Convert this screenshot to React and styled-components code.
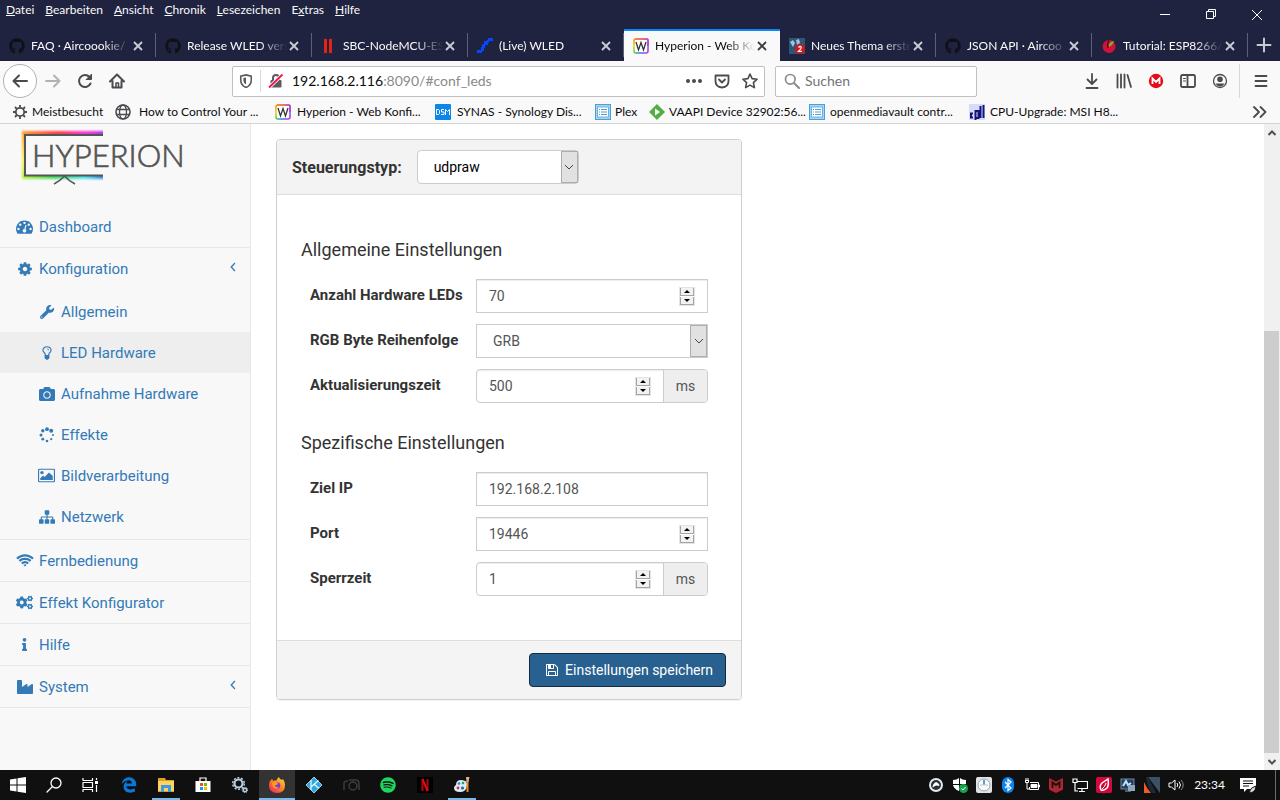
import React, { useState } from 'react';
import styled, { createGlobalStyle, css } from 'styled-components';
import {
  FaGithub, FaWrench, FaCamera, FaCogs, FaInfo, FaIndustry, FaEdgeLegacy, FaSpotify,
} from 'react-icons/fa';

const uiFont = '"Lato", "Open Sans", sans-serif';
const pageFont = '"Roboto", sans-serif';

const GlobalStyle = createGlobalStyle`
  * { box-sizing: border-box; }
  body { margin: 0; background: #fff; }
  button, input, select { font: inherit; color: inherit; margin: 0; }
  button { border: 0; padding: 0; background: none; }
  a { color: inherit; text-decoration: none; }
  ul { list-style: none; margin: 0; padding: 0; }
  svg { display: block; flex: none; }
`;

const Screen = styled.div`
  display: flex;
  flex-direction: column;
  min-height: 100vh;
`;

/* ---------- browser window ---------- */

const TitleBar = styled.header`
  display: flex;
  justify-content: space-between;
  height: 29px;
  background: #202340;
  color: #f9f9fa;
  font: 12px/20px ${uiFont};
`;

const MenuBar = styled.nav`
  display: flex;
  align-items: flex-start;
  gap: 11px;
  padding-left: 6px;
`;

const WindowButtons = styled.div`
  display: flex;
`;

const WindowButton = styled.button`
  display: grid;
  place-items: center;
  width: 46px;
  height: 29px;
`;

const TabStrip = styled.div`
  display: flex;
  height: 32px;
  background: #202340;
  color: #f9f9fa;
  font: 12px/16px ${uiFont};
`;

const Tab = styled.div`
  display: flex;
  align-items: center;
  flex: 1 1 0;
  min-width: 0;
  gap: 6px;
  padding: 0 13px 0 9px;
  border-top: 2px solid transparent;
  background: linear-gradient(#5d5f76, #5d5f76) right 2px / 1px 24px no-repeat;

  ${({ $active }) => $active && css`
    background: #f9f9fa;
    color: #0c0c0d;
    border-top-color: #0a84ff;
  `}
`;

const TabTitle = styled.span`
  flex: 1;
  margin-right: -4px;
  overflow: hidden;
  white-space: nowrap;
  mask-image: linear-gradient(to right, #000 72%, transparent 100%);
`;

const TabClose = styled.button`
  display: grid;
  place-items: center;
  width: 10px;
  height: 16px;
`;

const NewTab = styled.button`
  display: grid;
  place-items: center;
  width: 32px;
`;

const NavBar = styled.div`
  display: flex;
  align-items: center;
  height: 40px;
  padding: 0 3px;
  background: #f9f9fa;
  color: #4a4a4f;
  font: 14px/20px ${uiFont};
`;

const BackButton = styled.button`
  display: grid;
  place-items: center;
  width: 34px;
  height: 34px;
  border: 1px solid #b1b1b3;
  border-radius: 50%;
  background: #fff;
`;

const ToolButton = styled.button`
  display: grid;
  place-items: center;
  width: 32px;
  height: 32px;
  opacity: ${({ disabled }) => (disabled ? 0.4 : 1)};
`;

const Field = styled.div`
  display: flex;
  align-items: center;
  height: 31px;
  border: 1px solid #c0c0c2;
  border-radius: 2px;
  background: #fff;
`;

const AddressField = styled(Field)`
  flex: 1 1 533px;
  margin-left: 99px;
  gap: 12px;
  padding: 0 6px;
`;

const SearchField = styled(Field)`
  flex: 0 1 202px;
  margin: 0 99px 0 10px;
  padding-left: 8px;
  gap: 5px;
`;

const SiteInfo = styled.div`
  display: flex;
  align-items: center;
  gap: 7px;
`;

const ThinRule = styled.span`
  width: 1px;
  height: 22px;
  background: #d7d7db;
`;

const ToolbarRule = styled(ThinRule)`
  height: 34px;
  margin: 0 5px 0 3px;
`;

const Address = styled.div`
  flex: 1;
  color: #8a8a8c;
  white-space: nowrap;
  margin-left: -4px;
`;

const Host = styled.span`
  color: #0c0c0d;
`;

const SearchInput = styled.input`
  width: 100%;
  min-width: 0;
  border: 0;
  padding: 0;
  outline: 0;
  background: transparent;
  &::placeholder { color: #737373; opacity: 1; }
`;

const BookmarkBar = styled.nav`
  display: flex;
  align-items: center;
  height: 23px;
  padding: 0 12px;
  border-bottom: 1px solid #d4d4d6;
  background: #f9f9fa;
  color: #0c0c0d;
  font: 12px/20px ${uiFont};
`;

const Bookmark = styled.a`
  display: flex;
  align-items: center;
  flex: 0 0 ${({ $width }) => $width}px;
  gap: ${({ $gap = 6 }) => $gap}px;
  white-space: nowrap;
`;

const Overflow = styled.button`
  margin-left: auto;
`;

/* ---------- page ---------- */

const Page = styled.div`
  display: flex;
  flex: 1;
  background: #fff;
  font-family: ${pageFont};
`;

const Sidebar = styled.aside`
  flex: 0 0 251px;
  border-right: 1px solid #e7e7e7;
  background: #f8f8f8;
  color: #337ab7;
  font-size: 15px;
`;

const LogoLink = styled.a`
  display: block;
  height: 82px;
  padding: 2px 0 0 18px;
`;

const NavItem = styled.li`
  border-bottom: 1px solid #e7e7e7;
`;

const NavLink = styled.a`
  display: flex;
  align-items: center;
  gap: 6px;
  height: 41px;
  padding: 0 14px 0 16px;
`;

const SubLink = styled(NavLink)`
  padding-left: 38px;
  background: ${({ $active }) => ($active ? '#eee' : 'none')};
`;

const SubMenu = styled.ul`
  padding: 2px 0;
`;

const IconSlot = styled.span`
  display: grid;
  place-items: center;
  width: 17px;
`;

const Expander = styled.span`
  margin-left: auto;
  margin-bottom: 4px;
`;

const Main = styled.main`
  flex: 1;
  padding: 15px 26px 70px 25px;
  color: #333;
`;

const Panel = styled.form`
  width: calc(50% - 15px);
  min-width: 440px;
  border: 1px solid #cfcfcf;
  border-radius: 4px;
  box-shadow: 0 1px 1px rgba(0, 0, 0, 0.05);
  overflow: hidden;
`;

const PanelHeader = styled.div`
  display: flex;
  align-items: center;
  gap: 15px;
  height: 55px;
  padding-left: 15px;
  border-bottom: 1px solid #ddd;
  background: #f3f3f3;
  font-size: 16px;
`;

const HeaderLabel = styled.label`
  font-weight: 700;
`;

const PanelBody = styled.div`
  display: flex;
  flex-direction: column;
  gap: 27px;
  padding: 42px 24px 44px;
`;

const Section = styled.section`
  display: flex;
  flex-direction: column;
  gap: 16px;
`;

const SectionTitle = styled.h4`
  margin: 0;
  font-size: 18px;
  font-weight: 400;
  line-height: 26px;
`;

const Rows = styled.div`
  display: grid;
  gap: 11px;
  padding: 0 9px;
`;

const Row = styled.div`
  display: grid;
  grid-template-columns: 166px 1fr;
  align-items: center;
`;

const RowLabel = styled.label`
  padding-bottom: 2px;
  font-size: 15px;
  font-weight: 700;
  white-space: nowrap;
`;

const Control = styled.div`
  display: flex;
  align-items: center;
  height: 34px;
  border: 1px solid #ccc;
  border-radius: ${({ $rounded }) => ($rounded ? 4 : 0)}px;
  box-shadow: inset 0 1px 1px rgba(0, 0, 0, 0.075);
  background: #fff;
  color: #555;
  font-size: 14px;
  overflow: hidden;
`;

const TextInput = styled.input`
  flex: 1;
  min-width: 0;
  height: 100%;
  padding: 0 12px;
  border: 0;
  outline: 0;
  background: transparent;
  appearance: textfield;
  &::-webkit-inner-spin-button { display: none; }
`;

const Spinner = styled.div`
  display: grid;
  gap: 1px;
  margin-right: 12px;
  border: 1px solid #e3e3e3;
`;

const SpinButton = styled.button`
  display: grid;
  place-items: center;
  width: 14px;
  height: 8px;
  border: solid #a5a5a5;
  border-width: 0 1px 1px;
  background: #f2f2f2;
`;

const Unit = styled.span`
  display: grid;
  place-items: center;
  width: 44px;
  height: 100%;
  border-left: 1px solid #ccc;
  background: #eee;
`;

const SelectBox = styled.div`
  position: relative;
  width: ${({ $width }) => $width || '100%'};
  height: 34px;
  color: ${({ $dark }) => ($dark ? '#000' : '#555')};
  font-size: 14px;
`;

const Select = styled.select`
  width: 100%;
  height: 100%;
  padding: 0 34px 0 16px;
  border: 1px solid #ccc;
  border-radius: ${({ $rounded }) => ($rounded ? 4 : 0)}px;
  background: #fff;
  appearance: none;
`;

const SelectArrow = styled.span`
  position: absolute;
  top: 1px;
  right: 1px;
  bottom: 1px;
  display: grid;
  place-items: center;
  width: 17px;
  border: 1px solid #adadad;
  background: #e1e1e1;
  pointer-events: none;
`;

const PanelFooter = styled.div`
  display: flex;
  justify-content: flex-end;
  padding: 12px 15px;
  border-top: 1px solid #ddd;
  background: #f4f4f4;
`;

const SaveButton = styled.button`
  display: flex;
  align-items: center;
  gap: 6px;
  height: 34px;
  padding: 0 12px 0 15px;
  border: 1px solid #122b40;
  border-radius: 4px;
  background: #286090;
  color: #fff;
  font-size: 14px;
`;

const ScrollBar = styled.div`
  display: flex;
  flex-direction: column;
  width: 16px;
  background: #f0f0f0;
`;

const ScrollButton = styled.button`
  display: grid;
  place-items: center;
  height: 17px;
`;

const ScrollTrack = styled.div`
  display: grid;
  grid-template-rows: 190fr 422fr;
  flex: 1;
`;

const ScrollThumb = styled.div`
  grid-row: 2;
  margin-right: 1px;
  background: #cdcdcd;
`;

/* ---------- task bar ---------- */

const TaskBar = styled.footer`
  display: flex;
  height: 30px;
  background: #101010;
  color: #fff;
  font: 12px/30px ${uiFont};
`;

const SystemKeys = styled.div`
  display: flex;
  margin-right: 3px;
`;

const Apps = styled.div`
  display: flex;
  gap: 1px;
`;

const TaskButton = styled.button`
  display: grid;
  place-items: center;
  width: 36px;
  height: 30px;

  ${({ $running }) => $running && css`
    background: linear-gradient(#76b9ed, #76b9ed) center bottom / 28px 2px no-repeat;
  `}
  ${({ $active }) => $active && css`
    background: linear-gradient(#76b9ed, #76b9ed) center bottom / 36px 2px no-repeat #333;
  `}
`;

const Tray = styled.div`
  display: flex;
  align-items: center;
  gap: 8px;
  margin-left: auto;
`;

const Clock = styled.time`
  margin: 0 6px 0 2px;
`;

const ShowDesktop = styled.button`
  width: 5px;
  height: 30px;
  margin-left: 10px;
  border-left: 1px solid #6b6b6b;
`;

/* ---------- icons ---------- */

const Fa4 = ({ d, box = '0 0 1792 1792', size = 16 }) => (
  <svg width={size} height={size} viewBox={box} fill="currentColor"><path d={d} /></svg>
);

const faDashboard = 'M384 1152q0-53-37.5-90.5t-90.5-37.5-90.5 37.5-37.5 90.5 37.5 90.5 90.5 37.5 90.5-37.5 37.5-90.5zm192-448q0-53-37.5-90.5t-90.5-37.5-90.5 37.5-37.5 90.5 37.5 90.5 90.5 37.5 90.5-37.5 37.5-90.5zm428 481l101-382q6-26-7.5-48.5t-38.5-29.5-48 6.5-30 39.5l-101 382q-60 5-107 43.5t-63 98.5q-20 77 20 146t117 89 146-20 89-117q16-60-6-117t-72-91zm660-33q0-53-37.5-90.5t-90.5-37.5-90.5 37.5-37.5 90.5 37.5 90.5 90.5 37.5 90.5-37.5 37.5-90.5zm-640-640q0-53-37.5-90.5t-90.5-37.5-90.5 37.5-37.5 90.5 37.5 90.5 90.5 37.5 90.5-37.5 37.5-90.5zm448 192q0-53-37.5-90.5t-90.5-37.5-90.5 37.5-37.5 90.5 37.5 90.5 90.5 37.5 90.5-37.5 37.5-90.5zm320 448q0 261-141 483-19 29-54 29h-1402q-35 0-54-29-141-221-141-483 0-182 71-348t191-286 286-191 348-71 348 71 286 191 191 286 71 348z';
const faCog = 'M1152 896q0-106-75-181t-181-75-181 75-75 181 75 181 181 75 181-75 75-181zm512-109v222q0 12-8 23t-20 13l-185 28q-19 54-39 91 35 50 107 138 10 12 10 25t-9 23q-27 37-99 108t-94 71q-12 0-26-9l-138-108q-44 23-91 38-16 136-29 186-7 28-36 28h-222q-14 0-24.500-8.500t-11.500-21.500l-28-184q-49-16-90-37l-141 107q-10 9-25 9-14 0-25-11-126-114-165-168-7-10-7-23 0-12 8-23 15-21 51-66.500t54-70.500q-27-50-41-99l-183-27q-13-2-21-12.500t-8-23.500v-222q0-12 8-23t19-13l186-28q14-46 39-92-40-57-107-138-10-12-10-24 0-10 9-23 26-36 98.500-107.500t94.500-71.500q13 0 26 10l138 107q44-23 91-38 16-136 29-186 7-28 36-28h222q14 0 24.500 8.500t11.500 21.500l28 184q49 16 90 37l142-107q9-9 24-9 13 0 25 10 129 119 165 170 7 8 7 22 0 12-8 23-15 21-51 66.500t-54 70.500q26 50 41 98l183 28q13 2 21 12.500t8 23.500z';
const faBulb = 'M1120 576q0 13-9.500 22.500t-22.500 9.500-22.500-9.500-9.500-22.500q0-46-54-71t-106-25q-13 0-22.500-9.500t-9.500-22.500 9.500-22.500 22.500-9.500q50 0 99.500 16t87 54 37.500 90zm160 0q0-72-34.500-134t-90-101.500-123-62-136.500-22.500-136.500 22.500-123 62-90 101.500-34.500 134q0 101 68 180 10 11 30.500 33t30.500 33q128 153 141 298h228q13-145 141-298 10-11 30.500-33t30.500-33q68-79 68-180zm128 0q0 155-103 268-45 49-74.500 87t-59.500 95.500-34 107.500q47 28 47 82 0 37-25 64 25 27 25 64 0 52-45 81 13 23 13 47 0 46-31.500 71t-77.500 25q-20 44-60 70t-87 26-87-26-60-70q-46 0-77.500-25t-31.500-71q0-24 13-47-45-29-45-81 0-37 25-64-25-27-25-64 0-54 47-82-4-50-34-107.500t-59.500-95.500-74.500-87q-103-113-103-268 0-99 44.500-184.500t117-142 164-89 186.500-32.500 186.500 32.500 164 89 117 142 44.500 184.500z';
const faPicture = 'M576 576q0 80-56 136t-136 56-136-56-56-136 56-136 136-56 136 56 56 136zm1024 384v448h-1408v-192l320-320 160 160 512-512zm96-704h-1600q-13 0-22.500 9.500t-9.500 22.500v1216q0 13 9.500 22.500t22.500 9.500h1600q13 0 22.500-9.500t9.500-22.500v-1216q0-13-9.500-22.500t-22.500-9.500zm160 32v1216q0 66-47 113t-113 47h-1600q-66 0-113-47t-47-113v-1216q0-66 47-113t113-47h1600q66 0 113 47t47 113z';
const faSitemap = 'M1792 1248v320q0 40-28 68t-68 28h-320q-40 0-68-28t-28-68v-320q0-40 28-68t68-28h96v-192h-512v192h96q40 0 68 28t28 68v320q0 40-28 68t-68 28h-320q-40 0-68-28t-28-68v-320q0-40 28-68t68-28h96v-192h-512v192h96q40 0 68 28t28 68v320q0 40-28 68t-68 28h-320q-40 0-68-28t-28-68v-320q0-40 28-68t68-28h96v-192q0-52 38-90t90-38h512v-192h-96q-40 0-68-28t-28-68v-320q0-40 28-68t68-28h320q40 0 68 28t28 68v320q0 40-28 68t-68 28h-96v192h512q52 0 90 38t38 90v192h96q40 0 68 28t28 68z';
const faWifi = 'M1024 1523q-20 0-93-73.500t-73-93.500q0-32 62.500-54t103.500-22 103.500 22 62.500 54q0 20-73 93.500t-93 73.500zm270-271q-2 0-40-25t-101.500-50-128.500-25-128.500 25-101 50-40.500 25q-18 0-93.500-75t-75.500-93q0-13 10-23 78-77 196-121t233-44 233 44 196 121q10 10 10 23 0 18-75.500 93t-93.500 75zm273-272q-11 0-23-8-136-105-252-154.500t-268-49.500q-85 0-170.500 22t-149 53-113.500 62-79 53-31 22q-17 0-92-75t-75-93q0-12 10-22 132-132 320-205t380-73 380 73 320 205q10 10 10 22 0 18-75 93t-92 75zm271-271q-11 0-22-9-179-157-371.500-236.500t-420.500-79.500-420.500 79.500-371.500 236.500q-11 9-22 9-17 0-92.500-75t-75.500-93q0-13 10-23 187-186 445-288t527-102 527 102 445 288q10 10 10 23 0 18-75.500 93t-92.500 75z';
const faFloppy = 'M512 1536h768v-384h-768v384zm896 0h128v-896q0-14-10-38.500t-20-34.500l-281-281q-10-10-34-20t-39-10v416q0 40-28 68t-68 28h-576q-40 0-68-28t-28-68v-416h-128v1280h128v-416q0-40 28-68t68-28h832q40 0 68 28t28 68v416zm-384-928v-320q0-13-9.500-22.500t-22.500-9.500h-192q-13 0-22.500 9.500t-9.500 22.500v320q0 13 9.500 22.500t22.500 9.500h192q13 0 22.500-9.500t9.500-22.500zm640 32v928q0 40-28 68t-68 28h-1344q-40 0-68-28t-28-68v-1344q0-40 28-68t68-28h928q40 0 88 20t76 48l280 280q28 28 48 76t20 88z';

const EffectsIcon = () => (
  <svg width="16" height="16" viewBox="0 0 16 16" fill="currentColor">
    <circle cx="8" cy="2.200" r="1.900" />
    <circle cx="12.200" cy="3.800" r="2" />
    <circle cx="14" cy="8" r="1" />
    <circle cx="12.200" cy="12.200" r="1.100" />
    <circle cx="8" cy="14" r="1.300" />
    <circle cx="3.800" cy="12.200" r="1.400" />
    <circle cx="2" cy="8" r="1.500" />
    <circle cx="3.800" cy="3.800" r="1.700" />
  </svg>
);

const ChevronIcon = () => (
  <svg width="6" height="10" viewBox="0 0 6 10" fill="none" stroke="currentColor" strokeWidth="1.300"><path d="M5 1L1.200 5 5 9" /></svg>
);

const Stroke = ({ d, w = 2, size = 16, color = 'currentColor', cap = 'round', children }) => (
  <svg width={size} height={size} viewBox="0 0 16 16" fill="none" stroke={color} strokeWidth={w} strokeLinecap={cap} strokeLinejoin="round">
    <path d={d} />
    {children}
  </svg>
);

const CloseIcon = () => (
  <svg width="10" height="10" viewBox="0 0 10 10" fill="none" stroke="currentColor" strokeWidth="1.8" opacity="0.8"><path d="M1 1l8 8M9 1l-8 8" /></svg>
);

const HyperionFavicon = () => (
  <svg width="16" height="16" viewBox="0 0 16 16">
    <defs>
      <linearGradient id="fav" x1="0" y1="0" x2="1" y2="1">
        <stop offset="0" stopColor="#ff8a00" />
        <stop offset="0.25" stopColor="#e8d51c" />
        <stop offset="0.5" stopColor="#49d13f" />
        <stop offset="0.7" stopColor="#3f7bf0" />
        <stop offset="1" stopColor="#d02fd8" />
      </linearGradient>
      <linearGradient id="favTop"><stop offset="0" stopColor="#ff7a1a" /><stop offset="1" stopColor="#d22fe0" /></linearGradient>
    </defs>
    <rect x="1" y="1" width="14" height="14" rx="2" fill="#fff" stroke="url(#fav)" strokeWidth="1.6" />
    <path d="M2 1h12q1 0 1 1v6" fill="none" stroke="url(#favTop)" strokeWidth="1.6" />
    <path d="M3 4l2.500 8L8 4.500 10.500 12 13 4" fill="none" stroke="#333" strokeWidth="1.300" />
  </svg>
);

const RedBars = () => (
  <svg width="16" height="16"><path d="M3 1h3v14H3zM8 1h3v14H8z" fill="#e2231a" /></svg>
);

const WledFavicon = () => (
  <svg width="16" height="16"><path d="M0 12h5v3H0zM4 9h3v4H4zM5 6h3v4H5zM7 3h4v4H7zM11 0h5v3h-5zM10 2h2v3h-2z" fill="#0546ff" /></svg>
);

const ForumFavicon = () => (
  <svg width="16" height="16" viewBox="0 0 16 16">
    <rect width="16" height="16" fill="#2d5574" />
    <path d="M1 4l3-2 2 3-2 4zM7 2l3-1 1 4-3 2z" fill="#9cc7e4" />
    <circle cx="11" cy="11" r="5" fill="#d8141c" />
    <path d="M9.500 9.500q1.500-1.800 2.700-.4 .5 1-2.700 4.300h3.300" fill="none" stroke="#fff" strokeWidth="1.300" />
  </svg>
);

const BerryFavicon = () => (
  <svg width="16" height="16" viewBox="0 0 16 16">
    <circle cx="8" cy="8.500" r="6.500" fill="#d4103c" />
    <path d="M8 9q-1-5 5-6-1 4-5 6z" fill="#7db31c" />
    <path d="M7 10q-1-5 1-8" stroke="#3c1010" fill="none" strokeWidth="1.200" />
  </svg>
);

const DsmIcon = () => (
  <svg width="16" height="16" viewBox="0 0 16 16">
    <rect width="16" height="16" rx="1" fill="#0a87e8" />
    <path d="M1.500 5.500h2l1 1v3l-1 1h-2zM9 5.500H6.500v2.500H9v2.500H6M10.500 11V5.500l2 2 2-2V11" fill="none" stroke="#fff" strokeWidth="1" />
  </svg>
);

const ListIcon = () => (
  <svg width="16" height="16" viewBox="0 0 16 16">
    <rect x="0.500" y="0.500" width="15" height="15" fill="#a9d5f0" stroke="#4a9fd8" />
    <rect x="2.500" y="3" width="11" height="10" fill="#fff" stroke="#6bb2e0" />
    <path d="M4 5.500h1M6 5.500h6M4 8h1M6 8h6M4 10.500h1M6 10.500h6" stroke="#4a9fd8" />
  </svg>
);

const VaapiIcon = () => (
  <svg width="16" height="16" viewBox="0 0 16 16">
    <path d="M8 0l3 3 5 5-8 8-3-3-5-5z" fill="#52b043" />
    <path d="M6 4.500v7l5-3.500z" fill="#fff" />
  </svg>
);

const CpuIcon = () => (
  <svg width="16" height="16" viewBox="0 0 16 16">
    <rect width="16" height="16" fill="#d5dbf8" />
    <path d="M4 9.500H2v4h2M6.500 16V7h3v7h-2M11.500 2v12M14.500 1v13" fill="none" stroke="#14147c" strokeWidth="2" />
  </svg>
);

const GearIcon = () => (
  <svg width="16" height="16" viewBox="0 0 16 16" fill="none" stroke="#4a4a4f">
    <circle cx="8" cy="8" r="4.200" strokeWidth="1.800" />
    <path d="M8 1v2.500M8 12.500V15M1 8h2.500M12.500 8H15M3 3l1.800 1.800M11.200 11.200L13 13M3 13l1.800-1.800M11.200 4.800L13 3" strokeWidth="1.800" />
  </svg>
);

const GlobeIcon = () => (
  <svg width="16" height="16" viewBox="0 0 16 16" fill="none" stroke="#4a4a4f" strokeWidth="1.300">
    <circle cx="8" cy="8" r="7" strokeWidth="1.600" />
    <ellipse cx="8" cy="8" rx="3.500" ry="7" />
    <path d="M1 5.500h14M1 10.500h14" />
  </svg>
);

const ShieldIcon = () => (
  <svg width="14" height="14" viewBox="0 0 16 16">
    <path d="M8 1l6 1.500V7q0 5.500-6 8.500Q2 12.500 2 7V2.500z" fill="none" stroke="#5b5b60" strokeWidth="1.800" />
    <path d="M8 4v8q-3-2-3-5V4.500z" fill="#5b5b60" />
  </svg>
);

const InsecureIcon = () => (
  <svg width="16" height="16" viewBox="0 0 16 16">
    <path d="M5 7V5q0-3 3-3t3 3v2" fill="none" stroke="#5b5b60" strokeWidth="2" />
    <rect x="2.500" y="7" width="11" height="7.500" rx="1" fill="#5b5b60" />
    <path d="M1 14.500L14.500 1.500" stroke="#fff" strokeWidth="3.500" />
    <path d="M1 14.500L14.500 1.500" stroke="#f5134a" strokeWidth="1.800" />
  </svg>
);

const MegaIcon = () => (
  <svg width="16" height="16" viewBox="0 0 16 16">
    <circle cx="8" cy="8" r="7.200" fill="#e60b14" />
    <path d="M4.500 11V5.500L8 9l3.500-3.500V11" fill="none" stroke="#fff" strokeWidth="1.800" />
  </svg>
);

const AccountIcon = () => (
  <svg width="16" height="16" viewBox="0 0 16 16">
    <circle cx="8" cy="8" r="6.500" fill="none" stroke="currentColor" strokeWidth="1.300" />
    <circle cx="8" cy="6.300" r="2.800" fill="currentColor" />
    <path d="M3.500 10.500h9q-1.500 3-4.500 3t-4.500-3z" fill="currentColor" />
  </svg>
);

const HyperionLogo = () => (
  <svg width="180" height="64" viewBox="18 126 180 64">
    <defs>
      <linearGradient id="glowTop"><stop offset="0" stopColor="#ff9a2e" /><stop offset="0.4" stopColor="#ff3b4e" /><stop offset="0.7" stopColor="#ff35d8" /><stop offset="1" stopColor="#8a3cf5" /></linearGradient>
      <linearGradient id="glowLeft" x1="0" y1="0" x2="0" y2="1"><stop offset="0" stopColor="#ff9a2e" /><stop offset="0.6" stopColor="#fff04a" /><stop offset="1" stopColor="#b6f03c" /></linearGradient>
      <linearGradient id="glowBottom"><stop offset="0" stopColor="#b6f03c" /><stop offset="0.35" stopColor="#3fe05a" /><stop offset="0.7" stopColor="#4fe6f0" /><stop offset="1" stopColor="#2f55e8" /></linearGradient>
      <filter id="soft" x="-10%" y="-10%" width="120%" height="120%"><feGaussianBlur stdDeviation="0.8" /></filter>
      <clipPath id="cut"><rect x="18" y="126" width="85" height="64" /></clipPath>
    </defs>
    <g clipPath="url(#cut)">
      <g filter="url(#soft)">
        <rect x="22" y="131" width="90" height="5" fill="url(#glowTop)" />
        <rect x="22" y="132" width="4" height="46" fill="url(#glowLeft)" />
        <rect x="22" y="174" width="90" height="5" fill="url(#glowBottom)" />
      </g>
      <path d="M110 135H25v40.500h85" fill="#f8f8f8" stroke="#555" strokeWidth="2" />
    </g>
    <path d="M54 184q6-3 10.500-8 4.500 5 10.500 8" fill="none" stroke="#555" strokeWidth="1.600" />
    <text x="32" y="167" fill="#555" stroke="#555" strokeWidth="0.700" fontFamily="Lato, sans-serif" fontSize="31" fontWeight="300">HYPERION</text>
  </svg>
);

const WindowsIcon = () => (
  <svg width="16" height="16" viewBox="0 0 16 16" fill="#fff"><path d="M0 2.500l6.500-1V7.500H0zM7.500 1.300L16 0v7.500H7.500zM0 8.500h6.500v6L0 13.500zM7.500 8.500H16V16l-8.500-1.300z" /></svg>
);

const ExplorerIcon = () => (
  <svg width="18" height="16" viewBox="0 0 18 16">
    <path d="M1 1h7l1 2h8v12H1z" fill="#d9a126" />
    <path d="M1 4h16v10H1z" fill="#ffd45e" />
    <path d="M4 15V8h10v7h-3v-4H7v4z" fill="#3b9be8" />
  </svg>
);

const StoreIcon = () => (
  <svg width="16" height="16" viewBox="0 0 16 16">
    <path d="M5 4V1h6v3" fill="none" stroke="#fff" strokeWidth="1.200" />
    <path d="M0.500 4h15v11h-15z" fill="#fff" />
    <path d="M5 6h3v3H5z" fill="#f25022" /><path d="M9 6h3v3H9z" fill="#7fba00" />
    <path d="M5 10h3v3H5z" fill="#00a4ef" /><path d="M9 10h3v3H9z" fill="#ffb900" />
  </svg>
);

const ServicesIcon = () => (
  <svg width="16" height="16" viewBox="0 0 16 16" fill="none" stroke="#b5cfe2">
    <circle cx="6.500" cy="6.500" r="4" strokeWidth="2.200" />
    <circle cx="6.500" cy="6.500" r="5.800" strokeWidth="1.500" strokeDasharray="2 1.640" />
    <circle cx="13" cy="13" r="1.700" strokeWidth="1.500" />
    <circle cx="13" cy="13" r="2.700" strokeDasharray="1.200 0.920" />
  </svg>
);

const FirefoxIcon = () => (
  <svg width="16" height="16" viewBox="0 0 16 16">
    <defs><linearGradient id="fox" x1="1" y1="0" x2="0.200" y2="1"><stop offset="0" stopColor="#ffe14a" /><stop offset="0.500" stopColor="#ff8a1e" /><stop offset="1" stopColor="#f5246a" /></linearGradient></defs>
    <path d="M3 2l1.500 2Q6 3 7.500 3.500 8 1 10 0q0 2 3 3l1-1q2 3 2 6 0 8-8 8T0 8q0-4 3-6z" fill="url(#fox)" />
    <circle cx="8" cy="8.500" r="3.300" fill="#7a3ddb" />
    <path d="M3 6q3-2 6 0 0 2-3 2 0 3 4 2-2 3-5 1-2-2-2-5z" fill="#ff9a22" />
  </svg>
);

const KodiIcon = () => (
  <svg width="16" height="16" viewBox="0 0 16 16">
    <path d="M8 0l8 8-8 8-8-8z" fill="#2ea8e0" stroke="#bfe6f7" strokeWidth="0.800" />
    <path d="M5 3v10M5 10l7.500-6.500M8.500 7.500l4.500 4" stroke="#f2fafd" strokeWidth="1.200" fill="none" />
  </svg>
);

const DarkCameraIcon = () => (
  <svg width="18" height="16" viewBox="0 0 18 16" fill="none" stroke="#3d3d3d" strokeWidth="1.500">
    <path d="M2 13V6q0-2 4-2M7 3h8q2 1 2 3v7" /><circle cx="11" cy="9" r="4" />
  </svg>
);

const NetflixIcon = () => (
  <svg width="16" height="16" viewBox="0 0 16 16">
    <rect width="16" height="16" fill="#000" />
    <path d="M5.500 14V2M10.500 14V2" stroke="#b00610" strokeWidth="2" /><path d="M5.500 2l5 12" stroke="#e50914" strokeWidth="2" />
  </svg>
);

const PaintIcon = () => (
  <svg width="16" height="16" viewBox="0 0 16 16">
    <path d="M7 3q7 0 6 6t-7 6q-6 0-6-4 0-2 2-3 0-5 5-5z" fill="#d9ecf7" />
    <circle cx="5" cy="6.500" r="1.300" fill="#2f7ed0" /><circle cx="9" cy="6" r="1.300" fill="#2fa84a" />
    <circle cx="4" cy="11" r="1.400" fill="#d8352c" /><circle cx="8.500" cy="11" r="1.500" fill="#1b5fae" />
    <path d="M13.500 4v11" stroke="#e38b2c" strokeWidth="2" /><path d="M12 0h3.500l-1 5h-2z" fill="#d9b48a" />
  </svg>
);

const TrayIcons = () => (
  <>
    <svg width="16" height="16" viewBox="0 0 16 16"><circle cx="8" cy="8" r="6" fill="#26313c" stroke="#e8e8e8" strokeWidth="2" /><path d="M4.500 10.500q0-4 3.500-5.500 3.500 1.500 3.500 4l-3.500-.5z" fill="#fff" /></svg>
    <svg width="16" height="16" viewBox="0 0 16 16"><path d="M7 1v6H1V3q4 0 6-2zM8 1q2 2 6 2v4H8zM1 8h6v6q-5-2-6-6zM8 8h6q-1 4-6 6z" fill="#fff" /><circle cx="11.500" cy="11.500" r="4.500" fill="#16a34a" /><path d="M9.500 11.500l1.500 1.500 2.500-3" stroke="#fff" fill="none" /></svg>
    <svg width="16" height="16" viewBox="0 0 16 16"><rect width="16" height="16" rx="2" fill="#dfe3e6" /><circle cx="8" cy="8" r="6" fill="#f7f9fa" stroke="#9aa3aa" /><path d="M8 3v5" stroke="#1f86d6" strokeWidth="1.500" /><path d="M4 8h8" stroke="#c3c9ce" /></svg>
    <svg width="16" height="16" viewBox="0 0 16 16"><rect x="2" width="12" height="16" rx="6" fill="#0a84ef" /><path d="M5 5l6 6-3 2.500v-11L11 5l-6 6" fill="none" stroke="#fff" strokeWidth="1.200" /></svg>
    <svg width="16" height="16" viewBox="0 0 16 16" fill="none" stroke="#fff"><path d="M6 5.500h8.500v7H5.500V10M14.500 8h1v2h-1M1 3.500h4M2 1v2M4 1v2M3 6v6h2M1.500 3.500v2h3v-2" /><path d="M7 7.500h6v3H7z" fill="#fff" /></svg>
    <svg width="16" height="16" viewBox="0 0 16 16"><path d="M1 1l7 3.500L15 1v11.500L8 16l-7-3.500z" fill="#b3252e" /><path d="M4.500 11V5.500L8 8l3.500-2.500V11" fill="none" stroke="#101010" strokeWidth="1.800" /></svg>
    <svg width="16" height="16" viewBox="0 0 16 16" fill="none" stroke="#fff" strokeWidth="1.200"><path d="M5 4.500h10.500v7H5.500M10 11.500v3M7 14.500h6M1 2h4v3.500H1zM3 5.500v8.500h3" /></svg>
    <svg width="16" height="16" viewBox="0 0 16 16"><rect width="16" height="16" rx="2" fill="#d3093b" /><path d="M5 13q-2-4 1-7 3-2 6-4 1 6-1 9-3 3-6 2z" fill="none" stroke="#fff" strokeWidth="1.500" /><path d="M6 12q3-2 4-6" fill="none" stroke="#fff" /></svg>
    <svg width="16" height="16" viewBox="0 0 16 16"><rect x="1" y="2" width="13" height="10" fill="#23405f" stroke="#6f8aa3" /><path d="M3 9l3-5 2 4 3-2" stroke="#bde2fa" strokeWidth="2" fill="none" /><rect x="8" y="8" width="7" height="6" fill="#8fa7bd" /><path d="M5 14h6" stroke="#8fa7bd" /></svg>
    <svg width="16" height="16" viewBox="0 0 16 16"><path d="M4 0h12v16z" fill="#3b5266" /><path d="M0 5q3 7 7 11H0z" fill="#f0592a" /><path d="M2 0h2l8 16H8Q3 10 2 0z" fill="#1c2a36" /></svg>
    <svg width="16" height="16" viewBox="0 0 16 16" fill="none" stroke="#fff"><path d="M1 6v4h2.500L7 13V3L3.500 6z" /><path d="M9 6q1.500 2 0 4M11 4.500q3 3.500 0 7" /><path d="M13 3q4.500 5 0 10" opacity="0.500" /></svg>
  </>
);

const NotificationIcon = () => (
  <svg width="18" height="18" viewBox="0 0 18 18">
    <path d="M1 2h16v11H8l-3 3v-3H1z" fill="#fff" />
    <path d="M4 5h10M4 7.500h10M4 10h6" stroke="#101010" />
    <path d="M10 16q6 2 7-6-5 1-7 6z" fill="#ddd" stroke="#101010" />
  </svg>
);

/* ---------- data ---------- */

const menus = [['', 'D', 'atei'], ['', 'B', 'earbeiten'], ['', 'A', 'nsicht'], ['', 'C', 'hronik'], ['', 'L', 'esezeichen'], ['E', 'x', 'tras'], ['', 'H', 'ilfe']];

const tabs = [
  { title: 'FAQ · Aircoookie/', icon: <FaGithub size={16} color="#101018" /> },
  { title: 'Release WLED vers', icon: <FaGithub size={16} color="#101018" /> },
  { title: 'SBC-NodeMCU-ES', icon: <RedBars /> },
  { title: '(Live) WLED', icon: <WledFavicon /> },
  { title: 'Hyperion - Web Ko', icon: <HyperionFavicon />, active: true },
  { title: 'Neues Thema erste', icon: <ForumFavicon /> },
  { title: 'JSON API · Aircoo', icon: <FaGithub size={16} color="#101018" /> },
  { title: 'Tutorial: ESP8266/', icon: <BerryFavicon /> },
];

const bookmarks = [
  { title: 'Meistbesucht', icon: <GearIcon />, width: 103, gap: 4 },
  { title: 'How to Control Your ...', icon: <GlobeIcon />, width: 160, gap: 8 },
  { title: 'Hyperion - Web Konfi...', icon: <HyperionFavicon />, width: 160 },
  { title: 'SYNAS - Synology Dis...', icon: <DsmIcon />, width: 160 },
  { title: 'Plex', icon: <ListIcon />, width: 54, gap: 4 },
  { title: 'VAAPI Device 32902:56...', icon: <VaapiIcon />, width: 160, gap: 4 },
  { title: 'openmediavault contr...', icon: <ListIcon />, width: 160, gap: 5 },
  { title: 'CPU-Upgrade: MSI H8...', icon: <CpuIcon />, width: 160, gap: 5 },
];

const configLinks = [
  { label: 'Allgemein', icon: <FaWrench size={14} /> },
  { label: 'LED Hardware', icon: <Fa4 d={faBulb} />, active: true },
  { label: 'Aufnahme Hardware', icon: <FaCamera size={16} /> },
  { label: 'Effekte', icon: <EffectsIcon /> },
  { label: 'Bildverarbeitung', icon: <Fa4 d={faPicture} box="-64 0 1920 1792" size={17} /> },
  { label: 'Netzwerk', icon: <Fa4 d={faSitemap} /> },
];

const lowerLinks = [
  { label: 'Fernbedienung', icon: <Fa4 d={faWifi} box="0 0 2048 1792" size={18} /> },
  { label: 'Effekt Konfigurator', icon: <FaCogs size={17} /> },
  { label: 'Hilfe', icon: <FaInfo size={13} /> },
  { label: 'System', icon: <FaIndustry size={16} />, expandable: true },
];

/* ---------- components ---------- */

const NumberField = ({ id, value, unit }) => {
  const [number, setNumber] = useState(value);
  return (
    <Control $rounded={Boolean(unit)}>
      <TextInput id={id} type="number" value={number} onChange={(e) => setNumber(e.target.value)} />
      <Spinner>
        <SpinButton type="button" aria-label="Mehr" onClick={() => setNumber(Number(number) + 1)}>
          <svg width="6" height="3"><path d="M0 3l3-3 3 3z" /></svg>
        </SpinButton>
        <SpinButton type="button" aria-label="Weniger" onClick={() => setNumber(Number(number) - 1)}>
          <svg width="6" height="3"><path d="M0 0l3 3 3-3z" /></svg>
        </SpinButton>
      </Spinner>
      {unit && <Unit>{unit}</Unit>}
    </Control>
  );
};

const DropDown = ({ id, options, width, dark, rounded }) => (
  <SelectBox $width={width} $dark={dark}>
    <Select id={id} $rounded={rounded}>
      {options.map((o) => <option key={o}>{o}</option>)}
    </Select>
    <SelectArrow>
      <svg width="10" height="6" fill="none" stroke="#444"><path d="M1 1l4 4 4-4" /></svg>
    </SelectArrow>
  </SelectBox>
);

const Browser = () => (
  <>
    <TitleBar>
      <MenuBar>
        {menus.map(([before, key, after]) => (
          <button key={after} type="button">{before}<u>{key}</u>{after}</button>
        ))}
      </MenuBar>
      <WindowButtons>
        <WindowButton aria-label="Minimieren"><svg width="10" height="10" stroke="#fff"><path d="M0 4.500h10" /></svg></WindowButton>
        <WindowButton aria-label="Wiederherstellen"><svg width="11" height="11" fill="none" stroke="#fff"><path d="M0.500 2.500h7v7h-7zM2.500 2.500v-2h7v7h-2" /></svg></WindowButton>
        <WindowButton aria-label="Schließen"><svg width="10" height="10" stroke="#fff"><path d="M0 0l10 10M10 0L0 10" /></svg></WindowButton>
      </WindowButtons>
    </TitleBar>

    <TabStrip>
      {tabs.map((tab) => (
        <Tab key={tab.title} $active={tab.active}>
          {tab.icon}
          <TabTitle>{tab.title}</TabTitle>
          <TabClose aria-label="Tab schließen"><CloseIcon /></TabClose>
        </Tab>
      ))}
      <NewTab aria-label="Neuer Tab"><Stroke d="M8 1.500v13M1.500 8h13" color="#c8c9d0" /></NewTab>
    </TabStrip>

    <NavBar>
      <BackButton aria-label="Zurück"><Stroke d="M15 8H2M7 2.500L1.500 8 7 13.500" /></BackButton>
      <ToolButton aria-label="Vor" disabled><Stroke d="M1 8h13M9 2.500L14.500 8 9 13.500" /></ToolButton>
      <ToolButton aria-label="Neu laden"><Stroke d="M13.500 10.500A6 6 0 1 1 12.500 4"><path d="M14.500 1.500v5h-5z" fill="currentColor" strokeWidth="1" /></Stroke></ToolButton>
      <ToolButton aria-label="Startseite"><Stroke d="M1 8.500L8 1.500l7 7M3.500 8v6.500h9V8"><path d="M7 14v-4h2.500v4" strokeWidth="1.500" /></Stroke></ToolButton>
      <AddressField>
        <SiteInfo><ShieldIcon /><ThinRule /><InsecureIcon /></SiteInfo>
        <Address><Host>192.168.2.116</Host>:8090/#conf_leds</Address>
        <svg width="16" height="16" fill="currentColor"><circle cx="2" cy="8" r="2" /><circle cx="8" cy="8" r="2" /><circle cx="14" cy="8" r="2" /></svg>
        <Stroke d="M1.500 2.500h13V8q0 6-6.500 6.500Q1.500 14 1.500 8zM5 6.500l3 3 3-3" w={1.8} />
        <Stroke d="M8 1l2.100 4.600 5 .6-3.700 3.400 1 5L8 12.100l-4.400 2.500 1-5L.9 6.200l5-.6z" w={1.6} />
      </AddressField>
      <SearchField>
        <Stroke d="M10.200 10.200L15 15" color="#8a8a8c"><circle cx="6.300" cy="6.300" r="4.800" strokeWidth="1.700" /></Stroke>
        <SearchInput aria-label="Suchen" placeholder="Suchen" />
      </SearchField>
      <ToolButton aria-label="Downloads"><Stroke d="M8 1v9M3.500 6.500L8 11l4.500-4.500M2.500 15h11" w={1.8} /></ToolButton>
      <ToolButton aria-label="Bibliothek"><Stroke d="M1.500 1.500v13M5 1.500v13M8.500 1.500v13M11.500 2l3.500 12" w={1.8} /></ToolButton>
      <ToolButton aria-label="MEGA"><MegaIcon /></ToolButton>
      <ToolButton aria-label="Sidebar"><Stroke d="M2.500 2h11q1.500 0 1.500 1.500v9q0 1.500-1.500 1.500h-11Q1 14 1 12.500v-9Q1 2 2.500 2zM7.500 2v12" w={1.8}><path d="M3.500 5.500h2M3.500 8h2" strokeWidth="1" /></Stroke></ToolButton>
      <ToolButton aria-label="Konto"><AccountIcon /></ToolButton>
      <ToolbarRule />
      <ToolButton aria-label="Menü"><Stroke d="M2.500 3h11M2.500 8h11M2.500 13h11" w={1.8} /></ToolButton>
    </NavBar>

    <BookmarkBar>
      {bookmarks.map((b) => (
        <Bookmark key={b.title} href="#" $width={b.width} $gap={b.gap}>{b.icon}{b.title}</Bookmark>
      ))}
      <Overflow aria-label="Weitere Lesezeichen"><Stroke d="M2 3l5 5-5 5M8.500 3l5 5-5 5" color="#4a4a4f" w={1.8} /></Overflow>
    </BookmarkBar>
  </>
);

const SideNav = () => (
  <Sidebar>
    <LogoLink href="#" aria-label="Hyperion"><HyperionLogo /></LogoLink>
    <ul>
      <NavItem><NavLink href="#dashboard"><IconSlot><Fa4 d={faDashboard} size={17} /></IconSlot>Dashboard</NavLink></NavItem>
      <NavItem>
        <NavLink href="#conf"><IconSlot><Fa4 d={faCog} /></IconSlot>Konfiguration<Expander><ChevronIcon /></Expander></NavLink>
        <SubMenu>
          {configLinks.map((l) => (
            <li key={l.label}>
              <SubLink href="#conf_leds" $active={l.active}><IconSlot>{l.icon}</IconSlot>{l.label}</SubLink>
            </li>
          ))}
        </SubMenu>
      </NavItem>
      {lowerLinks.map((l) => (
        <NavItem key={l.label}>
          <NavLink href="#"><IconSlot>{l.icon}</IconSlot>{l.label}{l.expandable && <Expander><ChevronIcon /></Expander>}</NavLink>
        </NavItem>
      ))}
    </ul>
  </Sidebar>
);

const LedSettings = () => (
  <Panel onSubmit={(e) => e.preventDefault()}>
    <PanelHeader>
      <HeaderLabel htmlFor="leddevices">Steuerungstyp:</HeaderLabel>
      <DropDown id="leddevices" options={['udpraw']} width="162px" dark rounded />
    </PanelHeader>
    <PanelBody>
      <Section>
        <SectionTitle>Allgemeine Einstellungen</SectionTitle>
        <Rows>
          <Row><RowLabel htmlFor="count">Anzahl Hardware LEDs</RowLabel><NumberField id="count" value={70} /></Row>
          <Row><RowLabel htmlFor="order">RGB Byte Reihenfolge</RowLabel><DropDown id="order" options={['GRB', 'RGB', 'BGR']} /></Row>
          <Row><RowLabel htmlFor="rewrite">Aktualisierungszeit</RowLabel><NumberField id="rewrite" value={500} unit="ms" /></Row>
        </Rows>
      </Section>
      <Section>
        <SectionTitle>Spezifische Einstellungen</SectionTitle>
        <Rows>
          <Row><RowLabel htmlFor="host">Ziel IP</RowLabel><Control><TextInput id="host" defaultValue="192.168.2.108" /></Control></Row>
          <Row><RowLabel htmlFor="port">Port</RowLabel><NumberField id="port" value={19446} /></Row>
          <Row><RowLabel htmlFor="latch">Sperrzeit</RowLabel><NumberField id="latch" value={1} unit="ms" /></Row>
        </Rows>
      </Section>
    </PanelBody>
    <PanelFooter>
      <SaveButton type="submit"><Fa4 d={faFloppy} size={14} />Einstellungen speichern</SaveButton>
    </PanelFooter>
  </Panel>
);

const Desktop = () => (
  <TaskBar>
    <SystemKeys>
      <TaskButton aria-label="Start"><WindowsIcon /></TaskButton>
      <TaskButton aria-label="Suche"><Stroke d="M6 10L1 15" w={1.3} color="#fff"><circle cx="10" cy="6" r="5" /></Stroke></TaskButton>
      <TaskButton aria-label="Taskansicht"><Stroke d="M1 1v2.500h9.500V1M1 15v-2.500h9.500V15M1 5.500h9.500v5H1zM14.500 1v2M14.500 8v7" w={1.2} color="#fff" cap="butt"><path d="M13 4h3v3h-3z" fill="#fff" stroke="none" /></Stroke></TaskButton>
    </SystemKeys>
    <Apps>
      <TaskButton aria-label="Edge"><FaEdgeLegacy size={16} color="#0b78d7" /></TaskButton>
      <TaskButton aria-label="Explorer" $running><ExplorerIcon /></TaskButton>
      <TaskButton aria-label="Store"><StoreIcon /></TaskButton>
      <TaskButton aria-label="Dienste"><ServicesIcon /></TaskButton>
      <TaskButton aria-label="Firefox" $active><FirefoxIcon /></TaskButton>
      <TaskButton aria-label="Kodi"><KodiIcon /></TaskButton>
      <TaskButton aria-label="Kamera"><DarkCameraIcon /></TaskButton>
      <TaskButton aria-label="Spotify"><FaSpotify size={16} color="#1ed760" /></TaskButton>
      <TaskButton aria-label="Netflix"><NetflixIcon /></TaskButton>
      <TaskButton aria-label="Paint" $running><PaintIcon /></TaskButton>
    </Apps>
    <Tray>
      <TrayIcons />
      <Clock>23:34</Clock>
      <NotificationIcon />
      <ShowDesktop aria-label="Desktop anzeigen" />
    </Tray>
  </TaskBar>
);

const App = () => (
  <Screen>
    <GlobalStyle />
    <Browser />
    <Page>
      <SideNav />
      <Main><LedSettings /></Main>
      <ScrollBar>
        <ScrollButton aria-label="Nach oben"><svg width="8" height="6" fill="none" stroke="#505050" strokeWidth="2"><path d="M0.500 5L4 1.500 7.500 5" /></svg></ScrollButton>
        <ScrollTrack><ScrollThumb /></ScrollTrack>
        <ScrollButton aria-label="Nach unten"><svg width="8" height="6" fill="none" stroke="#505050" strokeWidth="2"><path d="M0.500 1L4 4.500 7.500 1" /></svg></ScrollButton>
      </ScrollBar>
    </Page>
    <Desktop />
  </Screen>
);

export default App;
